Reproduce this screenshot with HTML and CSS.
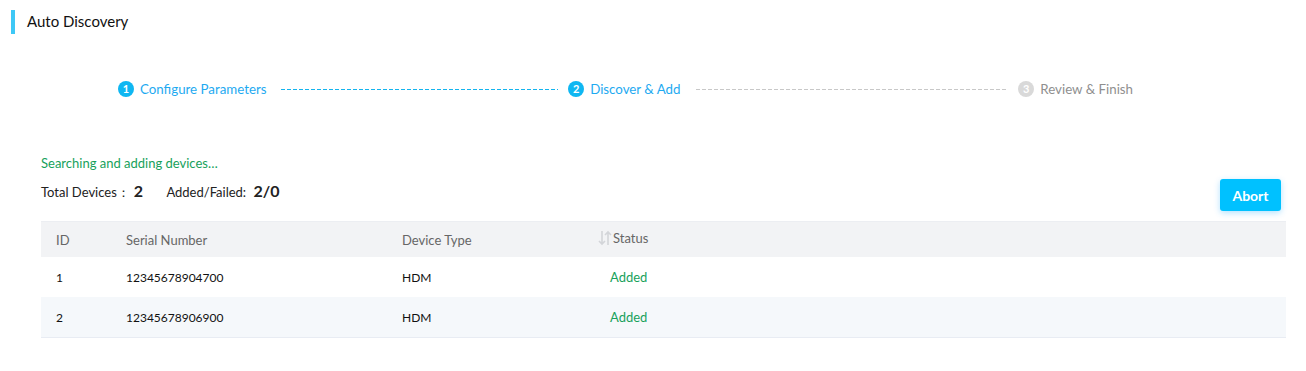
FILE: index.html
```html
<!DOCTYPE html>
<html lang="en">
<head>
  <meta charset="UTF-8">
  <title>Auto Discovery</title>
  <link rel="stylesheet" href="styles.css">
</head>
<body>

  <div class="page">
    <div class="page-title">Auto Discovery</div>

    <div class="steps">
      <div class="step done">
        <span class="step-num">1</span>
        <span class="step-label">Configure Parameters</span>
        <span class="step-line"></span>
      </div>
      <div class="step active">
        <span class="step-num">2</span>
        <span class="step-label">Discover &amp; Add</span>
        <span class="step-line"></span>
      </div>
      <div class="step last">
        <span class="step-num">3</span>
        <span class="step-label">Review &amp; Finish</span>
      </div>
    </div>

    <div class="progress">
      <div class="progress-info">
        <div class="searching">Searching and adding devices…</div>
        <div class="counts">
          <span>Total Devices：</span><b class="big">2</b>
          <span class="gap">Added/Failed:</span> <b class="big">2/0</b>
        </div>
      </div>
      <button class="btn-abort">Abort</button>
    </div>

    <table class="device-table">
      <thead>
        <tr>
          <th class="col-id">ID</th>
          <th class="col-serial">Serial Number</th>
          <th class="col-type">Device Type</th>
          <th class="col-status">
            <span class="sort">
              <svg width="14" height="16" viewBox="0 0 14 16">
                <path d="M4 1v13M1 11l3 3 3-3" fill="none" stroke="#d3d5d9" stroke-width="1.6"/>
                <path d="M10 15V2M7 5l3-3 3 3" fill="none" stroke="#d3d5d9" stroke-width="1.6"/>
              </svg>
            </span>Status
          </th>
        </tr>
      </thead>
      <tbody>
        <tr>
          <td>1</td>
          <td>12345678904700</td>
          <td>HDM</td>
          <td class="ok">Added</td>
        </tr>
        <tr>
          <td>2</td>
          <td>12345678906900</td>
          <td>HDM</td>
          <td class="ok">Added</td>
        </tr>
      </tbody>
    </table>
  </div>

</body>
</html>
```

FILE: styles.css
```css
body {
  margin: 0;
  font-family: Lato, "Noto Sans", sans-serif;
  color: #222;
  background: #fff;
}

.page {
  padding: 10px 20px 30px 41px;
}

.page-title {
  margin-left: -30px;
  border-left: 4px solid #3ec8f6;
  padding-left: 12px;
  height: 24px;
  line-height: 22px;
  font-size: 15px;
  color: #111;
}

/* steps */
.steps {
  display: flex;
  width: 1015px;
  margin: 47px 0 0 77px;
  height: 16px;
  align-items: center;
}

.step {
  flex: 1;
  display: flex;
  align-items: center;
  font-size: 13px;
}

.step.last {
  flex: none;
}

.step-num {
  width: 16px;
  height: 16px;
  border-radius: 50%;
  background: #0fb7f2;
  color: #fff;
  font-size: 11px;
  font-weight: bold;
  line-height: 16px;
  text-align: center;
  margin-right: 6px;
}

.step-label {
  color: #1eaaf1;
  white-space: nowrap;
  font-size: 13.3px;
}

.step-line {
  flex: 1;
  height: 1px;
  background: repeating-linear-gradient(90deg, #14b4ee 0 4px, transparent 4px 6px);
  margin: 0 10px 0 15px;
}

.step.active .step-line {
  background: repeating-linear-gradient(90deg, #c8c8c8 0 4px, transparent 4px 6px);
}

.step.last .step-num {
  background: #d9d9d9;
}

.step.last .step-label {
  color: #8f8f8f;
}

/* progress */
.progress {
  display: flex;
  justify-content: space-between;
  align-items: flex-end;
  margin-top: 57px;
  padding-right: 5px;
}

.searching {
  color: #17a15b;
  font-size: 13px;
  line-height: 18px;
}

.counts {
  margin-top: 8px;
  font-size: 13px;
  line-height: 22px;
}

.big {
  font-size: 16px;
  margin-left: 4px;
}

.gap {
  margin-left: 20px;
}

.btn-abort {
  width: 61px;
  height: 32px;
  border: none;
  border-radius: 3px;
  background: #00c1ff;
  color: #fff;
  font-family: Lato, sans-serif;
  font-size: 14px;
  font-weight: bold;
  box-shadow: 0 2px 6px rgba(0, 160, 255, 0.3);
  margin-bottom: -8px;
  cursor: pointer;
}

/* table */
.device-table {
  width: 100%;
  margin-top: 18px;
  border-collapse: collapse;
  font-size: 12px;
}

.device-table th {
  height: 35px;
  background: #f2f3f5;
  color: #666;
  font-weight: normal;
  font-size: 13px;
  text-align: left;
  padding: 0 0 0 15px;
  border-top: 1px solid #eceef2;
}

.device-table td {
  height: 40px;
  padding: 0 0 0 15px;
  color: #111;
}

.device-table tbody tr:nth-child(2) td {
  background: #f5f8fb;
  border-bottom: 1px solid #e8ecf3;
}

.col-id { width: 55px; }
.col-serial { width: 261px; }
.col-type { width: 181px; }

.sort {
  display: inline-block;
  vertical-align: -3px;
  margin-right: 1px;
}

.device-table td.ok {
  color: #17a15b;
  font-size: 13px;
  padding-left: 27px;
}
```
